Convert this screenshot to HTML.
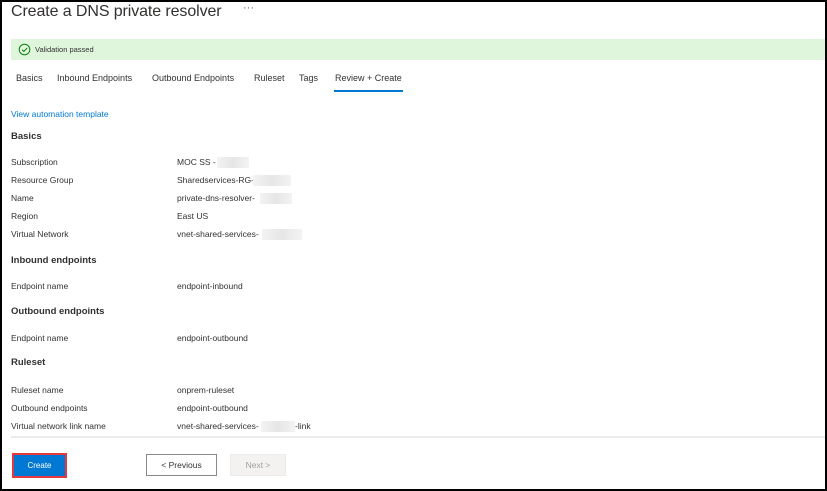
<!DOCTYPE html>
<html><head><meta charset="utf-8"><style>
*{margin:0;padding:0;box-sizing:border-box}
body{width:827px;height:491px;background:#fff;font-family:"Liberation Sans",sans-serif;color:#323130;position:relative;overflow:hidden}
.frame{position:absolute;left:0;top:0;width:827px;height:491px;border:2px solid #000;border-bottom-width:2px}
.a{position:absolute;white-space:nowrap}
.t{font-size:16px;left:11px;top:3px;color:#323130;letter-spacing:-0.1px}
.dots{left:243px;top:2px;font-size:11px;color:#605e5c}
.ban{position:absolute;left:11px;top:39px;width:814px;height:21px;background:#dff6dd}
.tab{font-size:9px;top:73px;color:#323130}
.lbl{font-size:8.5px;left:11px}
.val{font-size:8.5px;left:177px}
.h{font-size:9.5px;font-weight:bold;left:11px}
.blur{position:absolute;height:11px;background:linear-gradient(90deg,#f3f3f3,#e6e6e6,#f3f3f3)}
</style></head><body>
<div class="a t">Create a DNS private resolver</div>
<div class="a dots">···</div>
<div class="ban"></div>
<svg class="a" style="left:18px;top:43px" width="13" height="13" viewBox="0 0 13 13"><circle cx="6.5" cy="6.5" r="5.3" fill="none" stroke="#107c10" stroke-width="1"/><path d="M4 6.7l1.8 1.8L9.2 5" fill="none" stroke="#107c10" stroke-width="1"/></svg>
<div class="a" style="left:35px;top:45px;font-size:7.5px">Validation passed</div>
<div class="a tab" style="left:16px">Basics</div>
<div class="a tab" style="left:57px">Inbound Endpoints</div>
<div class="a tab" style="left:152px">Outbound Endpoints</div>
<div class="a tab" style="left:254px">Ruleset</div>
<div class="a tab" style="left:299px">Tags</div>
<div class="a tab" style="left:335px">Review + Create</div>
<div class="a" style="left:334px;top:90px;width:69px;height:2px;background:#0078d4"></div>
<div class="a" style="left:11px;top:109px;font-size:8.5px;color:#0078d4">View automation template</div>
<div class="a h" style="top:131px">Basics</div>
<div class="a lbl" style="top:157px">Subscription</div><div class="a val" style="top:157px">MOC SS -</div><div class="blur" style="left:217px;top:157px;width:32px"></div>
<div class="a lbl" style="top:175px">Resource Group</div><div class="a val" style="top:175px">Sharedservices-RG-</div><div class="blur" style="left:253px;top:175px;width:38px"></div>
<div class="a lbl" style="top:193px">Name</div><div class="a val" style="top:193px">private-dns-resolver-</div><div class="blur" style="left:260px;top:193px;width:32px"></div>
<div class="a lbl" style="top:211px">Region</div><div class="a val" style="top:211px">East US</div>
<div class="a lbl" style="top:229px">Virtual Network</div><div class="a val" style="top:229px">vnet-shared-services-</div><div class="blur" style="left:262px;top:229px;width:40px"></div>
<div class="a h" style="top:255px">Inbound endpoints</div>
<div class="a lbl" style="top:281px">Endpoint name</div><div class="a val" style="top:281px">endpoint-inbound</div>
<div class="a h" style="top:306px">Outbound endpoints</div>
<div class="a lbl" style="top:333px">Endpoint name</div><div class="a val" style="top:333px">endpoint-outbound</div>
<div class="a h" style="top:357px">Ruleset</div>
<div class="a lbl" style="top:385px">Ruleset name</div><div class="a val" style="top:385px">onprem-ruleset</div>
<div class="a lbl" style="top:403px">Outbound endpoints</div><div class="a val" style="top:403px">endpoint-outbound</div>
<div class="a lbl" style="top:421px">Virtual network link name</div><div class="a val" style="top:421px">vnet-shared-services-</div><div class="blur" style="left:261px;top:421px;width:34px"></div><div class="a val" style="left:295px;top:421px">-link</div>
<div class="a" style="left:11px;top:436px;width:814px;height:2px;background:#ebebeb"></div>
<div class="a" style="left:12px;top:453px;width:55px;height:25px;background:#e5393f"></div>
<div class="a" style="left:14px;top:455px;width:51px;height:21px;background:#0078d4;color:#fff;font-size:8px;text-align:center;line-height:21px">Create</div>
<div class="a" style="left:146px;top:454px;width:71px;height:22px;border:1px solid #8a8886;font-size:8.5px;text-align:center;line-height:20px">&lt; Previous</div>
<div class="a" style="left:230px;top:454px;width:56px;height:22px;border:1px solid #edebe9;background:#f3f2f1;color:#a19f9d;font-size:8.5px;text-align:center;line-height:20px">Next &gt;</div>
<div class="frame"></div>
</body></html>
